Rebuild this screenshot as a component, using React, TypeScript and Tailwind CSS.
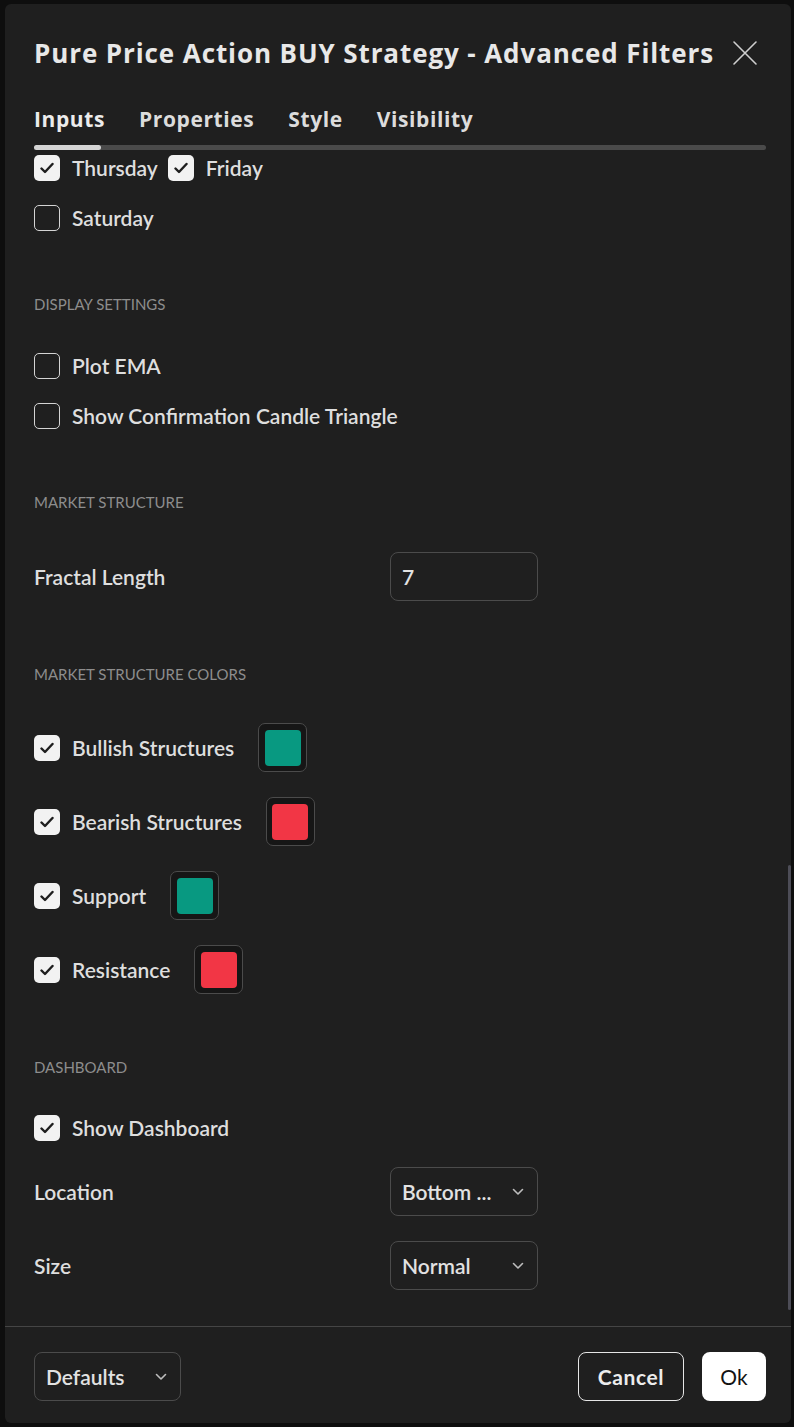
import type { ReactNode } from 'react';

const FONT = { fontFamily: 'Lato, "Open Sans", "Liberation Sans", sans-serif' };
const WIDE = { fontFamily: '"Open Sans", Lato, "Liberation Sans", sans-serif' };

function Check({ checked }: { checked: boolean }) {
  if (!checked) {
    return (
      <span className="block size-[26px] shrink-0 rounded-[5px] border-[1.5px] border-[#d4d4d4]" />
    );
  }
  return (
    <span className="flex size-[26px] shrink-0 items-center justify-center rounded-[5px] bg-[#f2f2f2]">
      <svg width="14" height="12" viewBox="0 0 14 12" fill="none">
        <path
          d="M1.5 6.5 5 10 12.5 2"
          stroke="#1e1e1e"
          strokeWidth="2.4"
          strokeLinecap="round"
          strokeLinejoin="round"
        />
      </svg>
    </span>
  );
}

function CheckRow({
  label,
  checked,
  className = '',
  children,
}: {
  label: string;
  checked: boolean;
  className?: string;
  children?: ReactNode;
}) {
  return (
    <div className={`flex items-center ${className}`}>
      <Check checked={checked} />
      <span className="ml-3 text-[21px] font-semibold text-[#dedede]">{label}</span>
      {children}
    </div>
  );
}

function Heading({ text, className = '' }: { text: string; className?: string }) {
  return (
    <div className={`flex h-[20px] items-center text-[15px] uppercase text-[#8d8d8d] ${className}`}>
      {text}
    </div>
  );
}

function Chevron() {
  return (
    <svg width="12" height="8" viewBox="0 0 12 8" fill="none">
      <path
        d="M1.5 1.5 6 6l4.5-4.5"
        stroke="#bdbdbd"
        strokeWidth="1.6"
        strokeLinecap="round"
        strokeLinejoin="round"
      />
    </svg>
  );
}

function Select({ value, width = 'w-[148px]' }: { value: string; width?: string }) {
  return (
    <div
      className={`flex h-[49px] ${width} items-center justify-between rounded-[8px] border border-[#4b4b4b] pl-[11px] pr-[13px]`}
    >
      <span className="text-[21px] font-semibold text-[#e2e2e2]">{value}</span>
      <Chevron />
    </div>
  );
}

function Swatch({ color }: { color: string }) {
  return (
    <span className="ml-6 flex size-[49px] items-center justify-center rounded-[7px] border border-[#4b4b4b] bg-[#161616]">
      <span className="size-[36px] rounded-[4px]" style={{ backgroundColor: color }} />
    </span>
  );
}

function FieldRow({ label, children, className = '' }: { label: string; children: ReactNode; className?: string }) {
  return (
    <div className={`grid h-[49px] grid-cols-[356px_148px] items-center ${className}`}>
      <span className="text-[21px] font-semibold text-[#dedede]">{label}</span>
      {children}
    </div>
  );
}

export default function App() {
  return (
    <div className="min-h-screen bg-[#0e0e0e] pb-[4px] pl-[5px] pr-[3px] pt-[4px]" style={FONT}>
      <div className="relative flex h-[1419px] flex-col rounded-[6px] bg-[#1f1f1f]">
        <header className="pl-[29px] pr-[25px] pt-[30px]">
          <div className="flex h-[38px] items-center justify-between">
            <h1 className="text-[26px] font-bold tracking-[0.9px] text-[#e8e8e8]" style={WIDE}>
              Pure Price Action BUY Strategy - Advanced Filters
            </h1>
            <svg width="26" height="26" viewBox="0 0 26 26" className="mr-[8px]" fill="none">
              <path d="M2 2 24 24M24 2 2 24" stroke="#cfcfcf" strokeWidth="1.6" strokeLinecap="round" />
            </svg>
          </div>
          <nav
            className="mt-[34px] flex h-[28px] items-center gap-[34px] text-[21px] font-bold tracking-[0.6px] text-[#dcdcdc]"
            style={WIDE}
          >
            <span className="text-[#ececec]">Inputs</span>
            <span>Properties</span>
            <span>Style</span>
            <span>Visibility</span>
          </nav>
          <div className="mt-[11px] h-[5px] rounded-full bg-[#4a4a4a]">
            <div className="h-full w-[67px] rounded-full bg-[#d4d4d4]" />
          </div>
        </header>

        <main className="relative flex-1 pl-[29px]">
          <div className="flex h-[36px] items-center">
            <CheckRow label="Thursday" checked />
            <CheckRow label="Friday" checked className="ml-[10px]" />
          </div>
          <CheckRow label="Saturday" checked={false} className="mt-[14px] h-[36px]" />

          <Heading text="Display Settings" className="mt-[58px]" />
          <CheckRow label="Plot EMA" checked={false} className="mt-[34px] h-[36px]" />
          <CheckRow label="Show Confirmation Candle Triangle" checked={false} className="mt-[14px] h-[36px]" />

          <Heading text="Market Structure" className="mt-[58px]" />
          <FieldRow label="Fractal Length" className="mt-[40px]">
            <div className="flex h-[49px] items-center rounded-[8px] border border-[#4b4b4b] px-[11px] text-[21px] font-semibold text-[#e2e2e2]">
              7
            </div>
          </FieldRow>

          <Heading text="Market Structure Colors" className="mt-[63px]" />
          <CheckRow label="Bullish Structures" checked className="mt-[39px] h-[49px]">
            <Swatch color="#089981" />
          </CheckRow>
          <CheckRow label="Bearish Structures" checked className="mt-[25px] h-[49px]">
            <Swatch color="#f23645" />
          </CheckRow>
          <CheckRow label="Support" checked className="mt-[25px] h-[49px]">
            <Swatch color="#089981" />
          </CheckRow>
          <CheckRow label="Resistance" checked className="mt-[25px] h-[49px]">
            <Swatch color="#f23645" />
          </CheckRow>

          <Heading text="Dashboard" className="mt-[63px]" />
          <CheckRow label="Show Dashboard" checked className="mt-[33px] h-[36px]" />
          <FieldRow label="Location" className="mt-[21px]">
            <Select value="Bottom ..." />
          </FieldRow>
          <FieldRow label="Size" className="mt-[25px]">
            <Select value="Normal" />
          </FieldRow>

          {/* scrollbar thumb */}
          <div className="absolute right-[0px] top-[715px] h-[445px] w-[3px] rounded-full bg-[#4d4d57]" />
        </main>

        <footer className="flex h-[97px] items-start justify-between border-t border-[#454545] pl-[29px] pr-[25px] pt-[25px]">
          <Select value="Defaults" width="w-[147px]" />
          <div className="flex gap-[18px]">
            <button className="h-[49px] w-[106px] rounded-[8px] border border-[#e6e6e6] text-[21px] font-bold tracking-[0.6px] text-[#ececec]">
              Cancel
            </button>
            <button className="h-[49px] w-[64px] rounded-[8px] bg-white text-[21px] text-[#131313]">
              Ok
            </button>
          </div>
        </footer>
      </div>
    </div>
  );
}
